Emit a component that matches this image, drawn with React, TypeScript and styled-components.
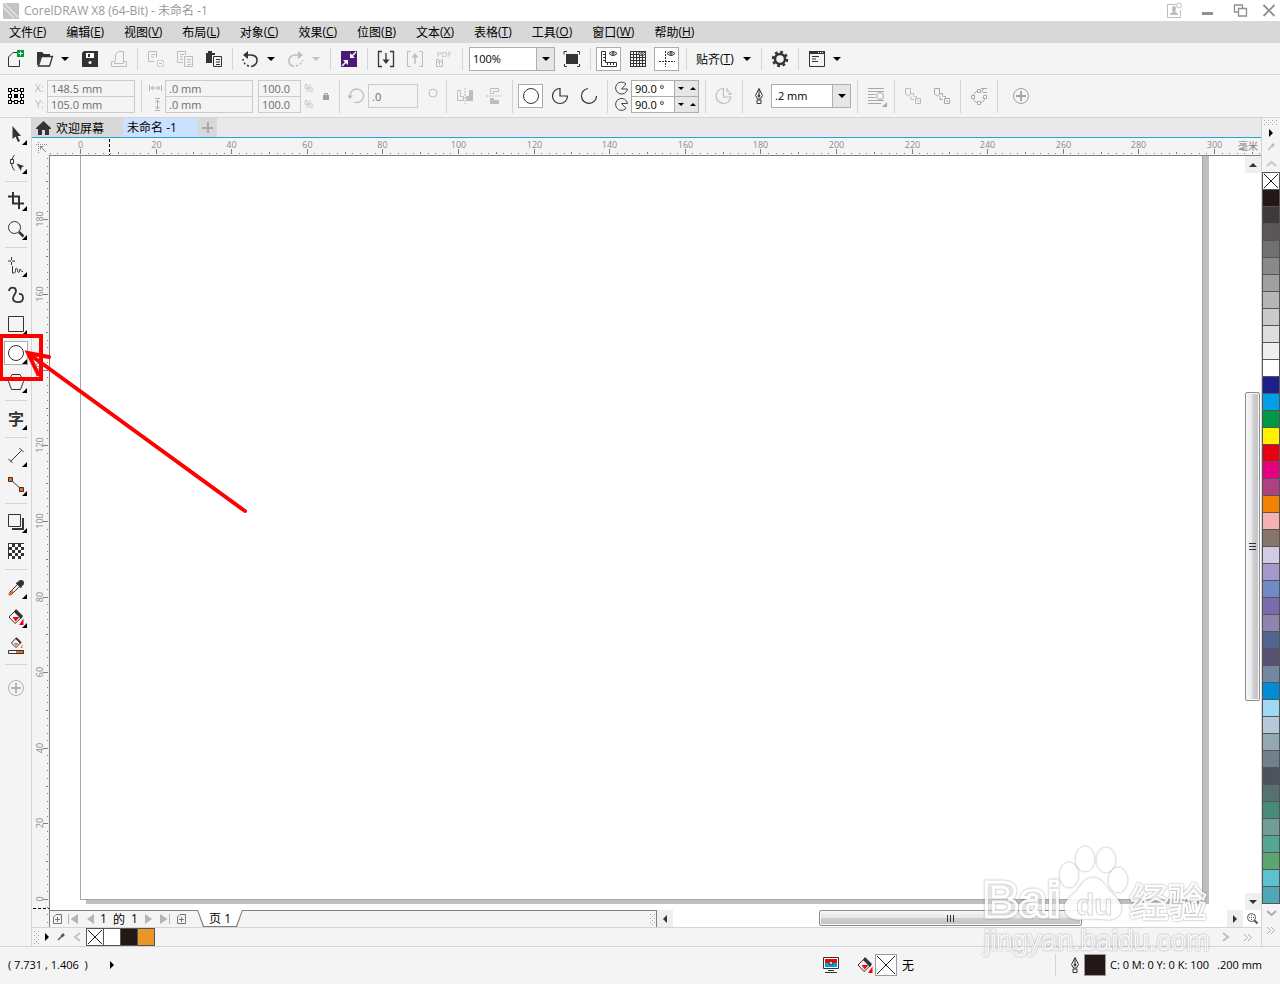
import React from "react";
import styled, { createGlobalStyle, css } from "styled-components";

const ink = "#333333";
const faint = "#bdbdbd";
const line = "#d4d4d4";
const panel = "#f4f4f4";

const GlobalStyle = createGlobalStyle`
  *, *::before, *::after { box-sizing: border-box; }
  body {
    margin: 0;
    background: ${panel};
    color: #000;
    font: 11px/16px "Open Sans", "Noto Sans CJK SC", sans-serif;
  }
  button, input, select { font: inherit; color: inherit; border-radius: 0; margin: 0; padding: 0; }
  button { background: none; border: 0; }
  svg { display: block; flex: none; }
`;

/* ---------- frame ---------- */

const Shell = styled.div`
  position: relative;
  display: flex;
  flex-direction: column;
  min-height: 100vh;
  overflow: hidden;
`;

const Cjk = styled.span`
  font: 12px/16px "Noto Sans CJK SC", sans-serif;
`;

const TitleBar = styled.header`
  display: flex;
  align-items: center;
  height: 21px;
  padding-left: 3px;
  background: #fff;
  color: #999;
`;

const Title = styled.h1`
  flex: 1;
  margin: 0 0 0 5px;
  font-size: 12px;
  line-height: 16px;
  font-weight: 400;
`;

const WindowButton = styled.button<{ $w: number }>`
  display: flex;
  justify-content: center;
  width: ${(p) => p.$w}px;
`;

const MenuBar = styled.nav`
  display: flex;
  align-items: center;
  gap: 20px;
  height: 22px;
  padding-left: 9px;
  background: #d8d8d8;
`;

const MenuItem = styled.button`
  display: flex;
  align-items: center;
  font-size: 12px;
  white-space: nowrap;
`;

const Bar = styled.div<{ $h: number }>`
  display: flex;
  align-items: center;
  height: ${(p) => p.$h}px;
  padding-left: 1px;
  border-bottom: 1px solid ${line};
  background: ${panel};
`;

const IconButton = styled.button<{ $w?: number; $on?: boolean }>`
  display: flex;
  flex: none;
  align-items: center;
  justify-content: center;
  width: ${(p) => p.$w ?? 29}px;
  height: 24px;
  ${(p) =>
    p.$on &&
    css`
      width: 25px;
      margin: 0 2px;
      background: #fff;
      border: 1px solid #adadad;
    `}
`;

const CaretButton = styled.button`
  display: flex;
  flex: none;
  justify-content: center;
  width: 16px;
  padding-right: 4px;
`;

const Sep = styled.span<{ $h: number }>`
  flex: none;
  width: 8px;
  height: ${(p) => p.$h}px;
  &::before {
    content: "";
    display: block;
    width: 1px;
    height: 100%;
    margin-left: 4px;
    background: ${line};
  }
`;

const SnapButton = styled.button`
  display: flex;
  width: 51px;
  padding-left: 6px;
  font-size: 12px;
  white-space: nowrap;
`;

const Combo = styled.label<{ $w: number }>`
  display: grid;
  flex: none;
  grid-template-columns: 1fr 18px;
  width: ${(p) => p.$w}px;
  height: 24px;
  margin-right: 2px;
  border: 1px solid #adadad;
  select {
    grid-area: 1 / 1 / 2 / 3;
    appearance: none;
    padding-left: 3px;
    border: 0;
    background: #fff;
  }
  span {
    display: grid;
    grid-area: 1 / 2 / 2 / 3;
    place-items: center;
    border-left: 1px solid #adadad;
    background: #e6e6e6;
    pointer-events: none;
  }
`;

/* ---------- property bar fields ---------- */

const Stack = styled.div<{ $w?: number }>`
  display: flex;
  flex: none;
  flex-direction: column;
  width: ${(p) => (p.$w ? p.$w + "px" : "auto")};
`;

const StackLabel = styled.label`
  display: flex;
  align-items: center;
  justify-content: flex-end;
  height: 16px;
  padding-right: 3px;
  color: ${faint};
`;

const Field = styled.input<{ $w: number; $h?: number; $live?: boolean }>`
  flex: none;
  width: ${(p) => p.$w}px;
  height: ${(p) => p.$h ?? 17}px;
  padding: 0 2px 0 3px;
  border: 1px solid ${(p) => (p.$live ? "#adadad" : "#cbcbcb")};
  background: ${(p) => (p.$live ? "#fff" : panel)};
  color: ${(p) => (p.$live ? "#000" : "#6d6d6d")};
  & + & { margin-top: -1px; }
`;

const SpinRow = styled.div`
  display: flex;
  height: 17px;
  & + & { margin-top: -1px; }
`;

const Spin = styled.button`
  display: grid;
  place-items: center;
  width: 12px;
  border: solid #adadad;
  border-width: 1px 0;
  background: #e6e6e6;
  &:last-child { border-right-width: 1px; }
`;

const Gap = styled.span<{ $w: number }>`
  flex: none;
  width: ${(p) => p.$w}px;
`;

/* ---------- body ---------- */

const Body = styled.div`
  display: flex;
  flex: 1;
`;

const Toolbox = styled.aside`
  display: flex;
  flex: none;
  flex-direction: column;
  width: 32px;
  padding: 2px 0 0 1px;
  border-right: 1px solid ${line};
`;

const Tool = styled.button`
  display: block;
  width: 30px;
  height: 29px;
`;

const ToolSep = styled.span`
  height: 8px;
  padding: 3px 4px 0;
  &::before {
    content: "";
    display: block;
    height: 1px;
    background: ${line};
  }
`;

const Center = styled.main`
  display: flex;
  flex: 1;
  flex-direction: column;
  min-width: 0;
`;

const TabStrip = styled.div`
  display: flex;
  height: 20px;
  border-bottom: 1px solid #1ea5e0;
  background: #e9e9e9;
`;

const Tab = styled.button<{ $w: number; $active?: boolean }>`
  display: flex;
  align-items: center;
  gap: 5px;
  width: ${(p) => p.$w}px;
  padding-left: 4px;
  background: ${(p) => (p.$active ? "#cce1ff" : "#d8d8d8")};
  font-size: 12px;
  white-space: nowrap;
`;

const Desk = styled.div`
  display: grid;
  flex: 1;
  grid-template-columns: 18px 1fr;
  grid-template-rows: 18px 1fr 17px;
`;

const Corner = styled.div`
  padding: 4px 0 0 4px;
`;

const TopRuler = styled.div`
  margin-left: -1px;
  padding-left: 1px;
  border-bottom: 1px solid #7f7f7f;
  overflow: hidden;
`;

const SideRuler = styled.div`
  display: flex;
  grid-row: 2 / 4;
  flex-direction: column;
  justify-content: flex-end;
  border-right: 1px solid #7f7f7f;
  overflow: hidden;
`;

const Workspace = styled.div`
  display: flex;
  background: #fff;
  overflow: hidden;
`;

const Sheet = styled.div`
  flex: 1;
  margin: -10px 42px 10px 30px;
  border: 1px solid #a6a6a6;
  background: #fff;
  box-shadow: 6px 4px 0 #bfbfbf;
`;

const VScroll = styled.div`
  display: flex;
  flex: none;
  flex-direction: column;
  width: 16px;
`;

const VTrack = styled.div`
  display: flex;
  flex: 1;
  flex-direction: column;
  padding-right: 1px;
`;

const thumb = css`
  display: grid;
  place-items: center;
  border: 1px solid #8c8c8c;
  border-radius: 2px;
  box-shadow: inset 0 0 0 1px #f7f7f7;
`;

const VLead = styled.div`
  height: 30.4%;
`;

const VThumb = styled.div`
  ${thumb}
  height: 43%;
  background: linear-gradient(90deg, #f7f7f7, #e6e6e8 48%, #cfcfd2 52%, #c2c2c5);
`;

const HTrack = styled.div`
  display: flex;
  flex: 1;
  padding-bottom: 1px;
`;

const HThumb = styled.div`
  ${thumb}
  width: 47.5%;
  margin-left: 26.4%;
  background: linear-gradient(#f7f7f7, #e6e6e8 48%, #cfcfd2 52%, #c2c2c5);
`;

const ScrollButton = styled.button`
  display: grid;
  flex: none;
  place-items: center;
  width: 16px;
  height: 17px;
  background: #efefef;
`;

const NavRow = styled.div`
  display: flex;
  background: #fff;
`;

const PageNav = styled.div`
  display: flex;
  flex: 1;
  align-items: center;
  padding-left: 1px;
  border-top: 1px solid #7f7f7f;
  border-right: 1px solid #7f7f7f;
  background: ${panel};
`;

const ScrollSide = styled.div`
  display: flex;
  flex: 1;
`;

const NavButton = styled.button<{ $w: number }>`
  display: grid;
  place-items: center;
  width: ${(p) => p.$w}px;
  height: 16px;
`;

const PageCount = styled.span`
  display: flex;
  justify-content: center;
  gap: 6px;
  width: 44px;
  font-size: 12px;
`;

const PageTab = styled.button`
  display: block;
  width: 46px;
  height: 17px;
  margin: -1px auto 0 9px;
  padding: 0 1px 1px;
  background: #7f7f7f;
  clip-path: polygon(0 0, 100% 0, calc(100% - 6px) 100%, 6px 100%);
  span {
    white-space: nowrap;
  }
  > span {
    display: block;
    height: 16px;
    background: #fff;
    font-size: 12px;
    line-height: 15px;
    clip-path: polygon(0 0, 100% 0, calc(100% - 6px) 100%, 6px 100%);
  }
`;

const DocPalette = styled.div`
  display: flex;
  align-items: center;
  height: 19px;
  padding-left: 2px;
  border-top: 1px solid ${line};
`;

const DocSwatches = styled.div`
  display: flex;
  gap: 1px;
  padding: 1px;
  margin: 0 auto 0 0;
  background: #555;
`;

const Swatch = styled.button<{ $c: string }>`
  display: block;
  width: 16px;
  height: 16px;
  background: ${(p) => p.$c};
`;

const PaletteColumn = styled.aside`
  display: flex;
  flex: none;
  flex-direction: column;
  width: 19px;
  border-left: 1px solid ${line};
`;

const PaletteButton = styled.button<{ $h: number }>`
  display: grid;
  place-items: center;
  height: ${(p) => p.$h}px;
`;

const SwatchList = styled.div`
  display: grid;
  gap: 1px;
  padding: 1px;
  background: #555;
`;

const StatusBar = styled.footer`
  display: flex;
  align-items: center;
  height: 38px;
  padding: 0 18px 2px 8px;
  border-top: 1px solid ${line};
  white-space: pre;
`;

const Coordinates = styled.span`
  width: 100px;
`;

const FillStatus = styled.div`
  display: flex;
  align-items: center;
  width: 232px;
  margin-left: auto;
  gap: 2px;
`;

const OutlineStatus = styled.div`
  display: flex;
  align-items: center;
  gap: 4px;
  height: 22px;
  padding-left: 14px;
  border-left: 1px solid ${line};
`;

const OutlineText = styled.span`
  display: flex;
  gap: 8px;
`;

const ColorWell = styled.span<{ $c: string }>`
  width: 22px;
  height: 22px;
  border: 1px solid #9a9a9a;
  background: ${(p) => p.$c};
`;

const Callout = styled.svg`
  position: absolute;
  top: 334px;
  left: 0;
  pointer-events: none;
`;

const Watermark = styled.svg`
  position: absolute;
  right: 66px;
  bottom: 26px;
  pointer-events: none;
  opacity: 0.9;
  filter: drop-shadow(0 0 1px rgba(0, 0, 0, 0.4));
`;

/* ---------- drawings ---------- */

type GlyphProps = { children: React.ReactNode; w?: number; h?: number; c?: string; crisp?: boolean; sw?: number };

const Glyph = ({ children, w = 16, h = 16, c = ink, crisp, sw = 1 }: GlyphProps) => (
  <svg
    width={w}
    height={h}
    viewBox={`0 0 ${w} ${h}`}
    fill="none"
    stroke={c}
    color={c}
    strokeWidth={sw}
    shapeRendering={crisp ? "crispEdges" : "auto"}
    overflow="visible"
    aria-hidden="true"
  >
    {children}
  </svg>
);

const solid = { fill: "currentColor", stroke: "none" };

const Caret = ({ c = "#000" }: { c?: string }) => (
  <Glyph w={8} h={4} c={c}><path {...solid} d="M0 0h8L4 4z" /></Glyph>
);
const Tiny = ({ up }: { up?: boolean }) => (
  <Glyph w={6} h={3} c="#000"><path {...solid} d={up ? "M0 3h6L3 0z" : "M0 0h6L3 3z"} /></Glyph>
);
const RightArrow = ({ c = "#000" }: { c?: string }) => (
  <Glyph w={4} h={8} c={c}><path {...solid} d="M0 0v8l4-4z" /></Glyph>
);
const Grip = ({ w, h }: { w: number; h: number }) => (
  <Glyph w={w} h={h} c="#a8a8a8" crisp>
    {Array.from({ length: Math.ceil(w / 2) * Math.ceil(h / 2) }, (_, i) => {
      const cols = Math.ceil(w / 2);
      const x = (i % cols) * 2;
      const y = Math.floor(i / cols) * 2;
      return (x + y) % 4 === 0 ? <rect key={i} {...solid} x={x} y={y} width="1" height="1" /> : null;
    })}
  </Glyph>
);
const Pencil = ({ c }: { c: string }) => (
  <Glyph w={8} h={8} c={c}>
    <path d="M1 7l4-4" strokeWidth="1.5" /><path d="M4.500 3.500L7 1" strokeWidth="2.5" />
  </Glyph>
);
const Cross = ({ s }: { s: number }) => (
  <Glyph w={s} h={s} c="#222"><path d={`M1 1L${s - 1} ${s - 1}M${s - 1} 1L1 ${s - 1}`} /></Glyph>
);
const Eye = () => (
  <g><path d="M8 2.500q4-4 8 0q-4 4-8 0z" fill={panel} /><circle cx="12" cy="2.500" r="1" /></g>
);
const NewPage = () => (
  <Glyph w={9} h={10} c="#777"><path d="M3 .5h5.500v9h-8V3zM4.500 3v5M2 5.500h5" /></Glyph>
);
const Bucket = () => (
  <g>
    <path d="M8 1L1 8l6 6.500L14 8z" />
    <path d="M4.500 8h7L7.500 12.500z" fill="#f00" stroke="none" />
    <path d="M8 0l7 7-2 3-7-7z" fill={ink} stroke="none" />
    <path d="M15.500 9.500V16h-4.500z" fill="#f00" stroke="none" />
  </g>
);
const PenNib = () => (
  <Glyph w={10} h={16} c={ink}>
    <path d="M5 .5L1.500 7.500l2 3.500h3l2-3.500zM5 1v7" /><circle cx="5" cy="8" r="1" fill={ink} /><path d="M3 12h4v3.500H3z" />
  </Glyph>
);
const PlusCircle = () => (
  <g><circle cx="8" cy="8" r="7.500" /><path d="M8 3v10M3 8h10" strokeWidth="1.800" /></g>
);

const toolGroups: { name: string; art: React.ReactNode; fly?: boolean }[][] = [
  [
    { name: "选择", fly: true, art: <path {...solid} d="M4.500 0v13l3-2.500 2.500 5.500 2-1-2.500-5h3.500z" /> },
    { name: "形状", fly: true, art: <g><path d="M6.500 0C2 5 3 11 6.500 15.500" /><path d="M2.500 4.500h3v4h-3z" fill={panel} /><path {...solid} d="M8.500 8.500L16 11l-2.500 1.500L13 16z" /></g> },
  ],
  [
    { name: "裁剪", fly: true, art: <path strokeWidth="2" d="M0 4.500h11V17M5 0v11.500h11" /> },
    { name: "缩放", fly: true, art: <g><circle cx="6.500" cy="6.500" r="6" /><path strokeWidth="2.500" d="M11 11l4.500 4.500" /></g> },
  ],
  [
    { name: "手绘", fly: true, art: <g><path d="M3.500-1v3M3.500 4v3M0 3h3M4 3h3M4.500 8v7h2c1.500 0 .5-5 2-5s.5 4.500 2 4.500 .5-3.500 1.500-3.500 .5 3 3 2.500" /></g> },
    { name: "艺术笔", art: <path strokeWidth="1.800" d="M1 4C1-.5 8-.5 8 4c0 3-3 4-3 7.500 0 5 10 5 10-.5 0-3-1.500-4.500-4-4" /> },
    { name: "矩形", fly: true, art: <path d="M.5.5h15v15H.5z" /> },
    { name: "椭圆形", fly: true, art: <g><rect x="-3.500" y="-3.500" width="23" height="23" fill="#fff" stroke="#adadad" /><circle cx="8" cy="8" r="7.500" /></g> },
    { name: "多边形", fly: true, art: <path d="M4 .5h8l3.500 7-3 8h-9l-3-8z" /> },
  ],
  [
    { name: "文本", fly: true, art: <text x="8" y="14" textAnchor="middle" fontSize="16" fontWeight="700" fontFamily="Noto Sans CJK SC, sans-serif" fill={ink} stroke="none">字</text> },
  ],
  [
    { name: "平行度量", fly: true, art: <path d="M2.500 13.500l11-11M.5 11l4 4M11.500 0l4 4" /> },
    { name: "连接器", fly: true, art: <g><path d="M3 3l10 9" /><path fill="#ff6a00" d="M.5.5h4v4h-4zM11.500 10.500h4v4h-4z" /></g> },
  ],
  [
    { name: "阴影", fly: true, art: <g><path d="M.5.5h12v12H.5z" /><path strokeWidth="2" d="M15 4v11H4" /></g> },
    { name: "透明度", art: <g shapeRendering="crispEdges"><rect {...solid} width="16" height="16" />{Array.from({ length: 25 }, (_, i) => i % 2 ? null : <rect key={i} x={(i % 5) * 3 + 1} y={Math.floor(i / 5) * 3 + 1} width="3" height="3" fill="#fff" stroke="none" />)}</g> },
  ],
  [
    { name: "颜色滴管", fly: true, art: <g><path d="M1 15l1-3 8-8 2 2-8 8z" /><path d="M1.500 14.500L5 11" stroke="#f26a1b" strokeWidth="2.500" /><path strokeWidth="2" d="M8.500 2.500l5 5" /><circle {...solid} cx="13" cy="3" r="3" /></g> },
    { name: "交互式填充", fly: true, art: <Bucket /> },
    { name: "智能填充", art: <g><path d="M8 0L3.500 5 8 9.500 12.500 5z" /><path strokeWidth="1.800" d="M8 0l5 5" /><path fill="#f26a1b" stroke="none" d="M6 5h4.500L8 8zM14.500 6v4H12.500zM8 12h8v4H8z" /><path d="M.5 12.500h15v3H.5z" /></g> },
  ],
];

const swatches = [
  "#231815", "#3e3a39", "#595757", "#727171", "#898989", "#9fa0a0", "#b4b5b5", "#c9caca", "#dcdddd", "#efefef",
  "#ffffff", "#1d2088", "#00a0e9", "#009944", "#fff100", "#e60012", "#e4007f", "#b04080", "#f08300", "#f5b2b2",
  "#86756b", "#cfcce4", "#a499ca", "#718bc7", "#7a6bae", "#9084ae", "#4f6590", "#58516f", "#7388a0", "#008cd6",
  "#9fd9f6", "#b5cad9", "#94a8b2", "#71808a", "#4b545e", "#567270", "#468b7a", "#729b9a", "#54a795", "#5aa572",
  "#5bc2d1", "#4fa8b6",
];

const menus: [string, string][] = [
  ["文件", "F"], ["编辑", "E"], ["视图", "V"], ["布局", "L"], ["对象", "C"], ["效果", "C"],
  ["位图", "B"], ["文本", "X"], ["表格", "T"], ["工具", "O"], ["窗口", "W"], ["帮助", "H"],
];

const PX_PER_MM = 3.78;
const tickSize = (mm: number) => (mm % 20 === 0 ? 5 : mm % 10 === 0 ? 2 : 1);
const range = (from: number, to: number) => Array.from({ length: (to - from) / 2 + 1 }, (_, i) => from + i * 2);
const rulerText = { fontSize: 9, fill: "#8a8a8a", textAnchor: "middle" as const };

const HorizontalRuler = () => (
  <svg width="100%" height="17" aria-label="水平标尺">
    {range(-8, 312).map((mm) => {
      const x = Math.round(30 + mm * PX_PER_MM);
      const t = tickSize(mm);
      return (
        <g key={mm}>
          <rect x={x} y={16 - t} width="1" height={t} fill="#7f7f7f" />
          {t === 5 && mm >= 0 && <text {...rulerText} x={x + 0.5} y="10">{mm}</text>}
        </g>
      );
    })}
    <path d="M59.500 1v16" stroke="#000" strokeDasharray="3 2" />
    <text x="100%" dx="-3" y="12" textAnchor="end" fontSize="10" fontFamily="Noto Sans CJK SC, sans-serif" fill="#7f7f7f">毫米</text>
  </svg>
);

const VerticalRuler = () => (
  <svg width="17" height="771" aria-label="垂直标尺">
    {range(-6, 196).map((mm) => {
      const y = Math.round(743 - mm * PX_PER_MM);
      const t = tickSize(mm);
      return (
        <g key={mm}>
          <rect x={16 - t} y={y} width={t} height="1" fill="#7f7f7f" />
          {t === 5 && <text {...rulerText} transform={`translate(11 ${y}) rotate(-90)`}>{mm}</text>}
        </g>
      );
    })}
    <path d="M1 752.500h16" stroke="#000" strokeDasharray="3 2" />
  </svg>
);

const ArcArrow = ({ c }: { c: string }) => (
  <Glyph c={c} w={17}>
    <path strokeWidth="1.500" d="M5 4h4.500c8 1 7 10-.5 11.500" /><path strokeWidth="1.500" strokeDasharray="2 2" d="M7 15C3 14 1 11 1 8" /><path {...solid} d="M6 0v8L1 4z" />
  </Glyph>
);

/* ---------- sections ---------- */

const StandardBar = () => (
  <Bar $h={32} role="toolbar" aria-label="标准">
    <IconButton aria-label="新建"><Glyph><path d="M9 1.500H5L.5 6v9.500h11V9" /><path fill="#009a3d" stroke="none" d="M9-1h7v7H9z" /><path stroke="#fff" d="M12.500.5v4M10.500 2.500h4" /></Glyph></IconButton>
    <IconButton aria-label="打开"><Glyph><path {...solid} d="M0 1h5l2 2h6v3H4L1 14H0z" /><path d="M4.500 5.500h11l-3 9.500H1.500z" fill={panel} strokeWidth="1.300" /></Glyph></IconButton>
    <CaretButton aria-label="最近打开"><Caret /></CaretButton>
    <IconButton aria-label="保存"><Glyph><path {...solid} d="M2 0h14v16H0V2z" /><path fill="#fff" stroke="none" d="M4 2h8v5H4z" /><path {...solid} d="M6 3h2v3H6z" /><circle cx="8" cy="11.500" r="1.500" fill="#fff" stroke="none" /></Glyph></IconButton>
    <IconButton aria-label="打印"><Glyph c={faint}><path d="M4.500 10V3l3-2.500h5V10M.5 15.500v-5h3v2h9v-2h3v5z" /></Glyph></IconButton>
    <Sep $h={22} />
    <IconButton aria-label="剪切"><Glyph c={faint}><path d="M8.500 6.500v-6h-8v10h6M3 3.500h4M3 6h3" /><path strokeDasharray="2 1" d="M9.500 9.500h6v6h-6z" /><path d="M11 12.500h3" /></Glyph></IconButton>
    <IconButton aria-label="复制"><Glyph c={faint}><path d="M6 11.500H.5v-11h8V4M3 3.500h4M3 6h3M3 8.500h3M7.500 5.500h8v10h-8zM10 8.500h4M10 11h4M10 13.500h4" /></Glyph></IconButton>
    <IconButton aria-label="粘贴"><Glyph><path {...solid} d="M0 2h2V0h4v2h3v2H6v8H0z" /><path d="M7.500 5.500h8v10h-8zM10 8.500h4M10 11h4M10 13.500h4" /></Glyph></IconButton>
    <Sep $h={22} />
    <IconButton aria-label="撤消"><ArcArrow c={ink} /></IconButton>
    <CaretButton aria-label="撤消列表"><Caret /></CaretButton>
    <IconButton aria-label="重做"><Glyph c={faint}><path strokeWidth="1.500" d="M11 4H7C-1 5-1 14 6 15.500" /><path strokeDasharray="2 2" strokeWidth="1.500" d="M8 15c4-1 6-3 6.500-6" /><path {...solid} d="M10 0v8l5-4z" /></Glyph></IconButton>
    <CaretButton aria-label="重做列表"><Caret c="#c4c4c4" /></CaretButton>
    <Sep $h={22} />
    <IconButton aria-label="搜索内容"><Glyph c="#fff"><path fill="#4b1a78" stroke="none" d="M0 0h16v16H0z" /><path strokeWidth="1.500" d="M15 1l-4 4M1 15l4-4" /><path {...solid} d="M9 2v5h5zM7 14V9H2z" /></Glyph></IconButton>
    <Sep $h={22} />
    <IconButton aria-label="导入"><Glyph><path strokeWidth="1.300" d="M4 .5H.5v15H4M12 .5h3.500v15H12M8 2v8" /><path {...solid} d="M4.500 8.500h7L8 13z" /></Glyph></IconButton>
    <IconButton aria-label="导出"><Glyph c={faint}><path d="M4 .5H.5v15H4M12 .5h3.500v15H12" /><path strokeWidth="1.500" d="M8 5v8" /><path {...solid} d="M4.500 6.500h7L8 2z" /></Glyph></IconButton>
    <IconButton aria-label="发布为 PDF"><Glyph c={faint}><text x="8" y="6" fontSize="8" textAnchor="middle" {...solid}>PDF</text><path d="M3 8.500H.5v7h6v-7H5M3.500 14V9M1.500 11.500L3.500 9.500l2 2" /></Glyph></IconButton>
    <Sep $h={22} />
    <Gap $w={3} />
    <Combo $w={86}>
      <select aria-label="缩放级别" defaultValue="100%"><option>100%</option></select>
      <span><Caret /></span>
    </Combo>
    <IconButton aria-label="全屏预览"><Glyph><path {...solid} d="M2 3h12v10H2z" /><path d="M0 3.500V.5h3M13 .5h2.500v3M.5 13v2.500H3M13 15.500h2.500V13" /></Glyph></IconButton>
    <Sep $h={22} />
    <IconButton $on aria-label="显示标尺"><Glyph><path d="M.5.5h4v11h11v4H.5zM2 3.500h2M2 6.500h2M2 9.500h2M6.500 12v2M9.500 12v2M12.500 12v2" /><Eye /></Glyph></IconButton>
    <IconButton aria-label="显示网格"><Glyph crisp><path d="M.5.500v15h15v-15zM3.500 0v16M6.500 0v16M9.500 0v16M12.500 0v16M0 3.500h16M0 6.500h16M0 9.500h16M0 12.500h16" /><g shapeRendering="auto"><Eye /></g></Glyph></IconButton>
    <IconButton $on aria-label="显示辅助线"><Glyph><path strokeDasharray="2 1" d="M6.500 0v16M0 10.500h16" /><Eye /></Glyph></IconButton>
    <Gap $w={1} />
    <Sep $h={22} />
    <SnapButton><Cjk>贴齐</Cjk>(<u>T</u>)</SnapButton>
    <CaretButton aria-label="贴齐选项"><Caret /></CaretButton>
    <Sep $h={22} />
    <IconButton aria-label="选项"><Glyph><circle cx="8" cy="8" r="5" strokeWidth="2.500" /><circle cx="8" cy="8" r="7" strokeWidth="2.400" strokeDasharray="2.800 2.700" /></Glyph></IconButton>
    <Sep $h={22} />
    <IconButton aria-label="应用程序启动器"><Glyph><path d="M.5.5h15v15H.5z" /><path {...solid} d="M0 0h16v3H0z" /><path stroke="#fff" strokeDasharray="1 1" d="M9 1.500h6" /><path d="M3 5.500h7M3 8h4M3 10.500h6" /></Glyph></IconButton>
    <CaretButton aria-label="启动器列表"><Caret /></CaretButton>
  </Bar>
);

const PropertyBar = () => (
  <Bar $h={43} role="toolbar" aria-label="属性栏">
    <IconButton aria-label="对象原点">
      <Glyph c="#000" crisp>
        <path d="M2.500 2.500h11v11h-11z" />
        {[0, 6, 12].flatMap((y) => [0, 6, 12].map((x) => <rect key={`${x}-${y}`} x={x + 0.5} y={y + 0.5} width="3" height="3" fill={x === 6 && y === 6 ? "#000" : "#fff"} />))}
      </Glyph>
    </IconButton>
    <Stack $w={17}><StackLabel htmlFor="px">X:</StackLabel><StackLabel htmlFor="py">Y:</StackLabel></Stack>
    <Stack><Field id="px" $w={88} defaultValue="148.5 mm" /><Field id="py" $w={88} defaultValue="105.0 mm" /></Stack>
    <Gap $w={2} /><Sep $h={33} /><Gap $w={2} />
    <Stack $w={18}>
      <StackLabel htmlFor="sw" aria-label="宽度"><Glyph w={13} h={6} c="#b0b0b0"><path d="M.5 0v6M12.500 0v6M2 3h9M4.500 1L2 3l2.500 2M8.500 1L11 3 8.500 5" /></Glyph></StackLabel>
      <StackLabel htmlFor="sh" aria-label="高度"><Glyph w={9} h={13} c="#b0b0b0"><path d="M2 .5h5M2 12.500h5M4.500 2v9M2.500 4.500l2-2.500 2 2.500M2.500 8.500l2 2.500 2-2.500" /></Glyph></StackLabel>
    </Stack>
    <Stack><Field id="sw" $w={88} defaultValue=".0 mm" /><Field id="sh" $w={88} defaultValue=".0 mm" /></Stack>
    <Gap $w={5} />
    <Stack><Field id="fx" $w={43} defaultValue="100.0" /><Field id="fy" $w={43} defaultValue="100.0" /></Stack>
    <Stack $w={15}><StackLabel htmlFor="fx">%</StackLabel><StackLabel htmlFor="fy">%</StackLabel></Stack>
    <IconButton $w={19} aria-label="锁定比率"><Glyph w={6} h={8} c="#a0a0a0"><path d="M1.500 4V1.500h3V4" /><path {...solid} d="M0 3h6v5H0z" /></Glyph></IconButton>
    <Sep $h={33} />
    <IconButton $w={25} as="label" htmlFor="rot" aria-label="旋转角度"><Glyph c={faint}><path strokeWidth="1.300" d="M2 8a6.800 6.800 0 1 1 4 6" /><path {...solid} d="M-1 7.500h6L2 11z" /></Glyph></IconButton>
    <Field id="rot" $w={50} $h={24} defaultValue=".0" />
    <Gap $w={10} />
    <Glyph w={10} c={faint}><circle cx="5" cy="5" r="4" /></Glyph>
    <Gap $w={4} />
    <Sep $h={33} />
    <IconButton aria-label="水平镜像"><Glyph c={faint}><path d="M.5 2.500h3v6h3v4h-6z" /><path strokeDasharray="2 1" d="M8 0v16" /><path fill={faint} d="M15.500 2.500h-3v6h-3v4h6z" /></Glyph></IconButton>
    <IconButton aria-label="垂直镜像"><Glyph c={faint}><path d="M4.500.5h8v3h-5v2h-3z" /><path strokeDasharray="2 1" d="M0 8h16" /><path fill={faint} d="M4.500 15.500h8v-3h-5v-2h-3z" /></Glyph></IconButton>
    <Sep $h={33} />
    <IconButton $on aria-label="椭圆形"><Glyph><circle cx="8" cy="8" r="7.500" /></Glyph></IconButton>
    <IconButton aria-label="饼图"><Glyph><path strokeWidth="1.200" d="M8 .5A7.500 7.500 0 1 0 15.500 8H8z" /></Glyph></IconButton>
    <IconButton aria-label="弧"><Glyph><path strokeWidth="1.200" d="M7 .5A7.500 7.500 0 1 0 15.500 8" /></Glyph></IconButton>
    <Sep $h={33} />
    <Stack $w={20}>
      <StackLabel htmlFor="a1" aria-label="起始角度"><Glyph w={13} h={12} c="#444"><path d="M11 2A6 6 0 1 0 12.500 7H6.500z" /></Glyph></StackLabel>
      <StackLabel htmlFor="a2" aria-label="结束角度"><Glyph w={13} h={12} c="#444"><path d="M11 10.500A6 6 0 1 1 12.500 5.500H6.500z" /></Glyph></StackLabel>
    </Stack>
    <Stack>
      {["a1", "a2"].map((id) => (
        <SpinRow key={id}>
          <Field id={id} $w={44} $live defaultValue="90.0 °" />
          <Spin aria-label="减小"><Tiny /></Spin><Spin aria-label="增大"><Tiny up /></Spin>
        </SpinRow>
      ))}
    </Stack>
    <Gap $w={2} /><Sep $h={33} />
    <IconButton aria-label="更改方向"><Glyph c={faint}><path strokeWidth="1.200" d="M7.500.5A7.500 7.500 0 1 0 15 9H7.500z" /><path d="M10 2c3 0 4 2 4 4M12 5l2 2 2-2M12 0l-2 2 2 2" /></Glyph></IconButton>
    <Sep $h={33} />
    <IconButton $w={25} as="label" htmlFor="outline" aria-label="轮廓宽度"><PenNib /></IconButton>
    <Combo $w={80}>
      <select id="outline" defaultValue=".2 mm"><option>.2 mm</option></select>
      <span><Caret /></span>
    </Combo>
    <Sep $h={33} />
    <IconButton aria-label="文本换行"><Glyph c="#a8a8a8"><path d="M0 .5h16M0 3.500h16M0 6.500h7M0 9.500h7M0 12.500h16M0 15.500h13" /><circle cx="12" cy="8" r="3.500" fill={panel} /><path {...solid} d="M19 14v5h-5z" /></Glyph></IconButton>
    <Sep $h={33} />
    <IconButton aria-label="到图层前面"><Glyph c={faint}><path d="M.5.5h5v6l-2 1.500-3-2zM5.500 5.500h3v3M6 8.500v3h3M9.500 8.500h2v2M10.500 10.500h5v5h-5zM12 12l2 2" /></Glyph></IconButton>
    <IconButton aria-label="到图层后面"><Glyph c="#a8a8a8"><path d="M.5.5h5v6l-2 1.500-3-2zM5.500 5.500h3v3M6 8.500v3h3M9.500 8.500h2v2M10.500 10.500h5v5h-5zM12 12l2 2" /></Glyph></IconButton>
    <Sep $h={33} />
    <IconButton aria-label="转换为曲线"><Glyph c="#a8a8a8"><path d="M8 3a6 6 0 1 0 6 6M10 .5h6M12 4.500h4M10 4.500l3-4" /><g fill="#fff"><path d="M6.500 1.500h3v3h-3zM.5 7.500h3v3h-3zM6.500 13.500h3v3h-3zM12.500 7.500h3v3h-3z" /></g></Glyph></IconButton>
    <Sep $h={33} />
    <Gap $w={5} />
    <IconButton aria-label="快速自定义"><Glyph c="#a0a0a0"><PlusCircle /></Glyph></IconButton>
  </Bar>
);

const DrawingWindow = () => (
  <Center>
    <TabStrip>
      <Tab $w={91}><Glyph w={15} h={14}><path {...solid} d="M7.500 0L15 7v1h-2v6H9V9H6v5H2V8H0V7z" /></Glyph><Cjk>欢迎屏幕</Cjk></Tab>
      <Tab $w={75} $active><span><Cjk>未命名</Cjk> -1</span></Tab>
      <Tab $w={19} aria-label="新建文档"><Glyph w={11} h={11} c="#a8a8a8" sw={2} crisp><path d="M5.500 0v11M0 5.500h11" /></Glyph></Tab>
    </TabStrip>
    <Desk>
      <Corner><Glyph w={11} h={11} c="#8a8a8a"><path strokeDasharray="1 1" d="M0 2.500h11M2.500 0v11" /><path d="M4 4l6 6M4.500 7.500v-3h3" /></Glyph></Corner>
      <TopRuler><HorizontalRuler /></TopRuler>
      <SideRuler><VerticalRuler /></SideRuler>
      <Workspace>
        <Sheet />
        <VScroll>
          <ScrollButton aria-label="向上滚动"><Glyph w={8} h={4}><path {...solid} d="M0 4h8L4 0z" /></Glyph></ScrollButton>
          <VTrack>
            <VLead />
            <VThumb><Glyph w={7} h={8} crisp><path d="M0 .5h7M0 3.500h7M0 6.500h7" /></Glyph></VThumb>
          </VTrack>
          <ScrollButton aria-label="向下滚动"><Caret c={ink} /></ScrollButton>
        </VScroll>
      </Workspace>
      <NavRow>
        <PageNav>
          <NavButton $w={12} aria-label="在前面添加页"><NewPage /></NavButton>
          <NavButton $w={20} aria-label="第一页"><Glyph w={10} h={10} c="#b5b5b5"><path d="M.5 0v10" /><path {...solid} d="M10 0v10L2.500 5z" /></Glyph></NavButton>
          <NavButton $w={14} aria-label="上一页"><Glyph w={7} h={10} c="#b5b5b5"><path {...solid} d="M7 0v10L0 5z" /></Glyph></NavButton>
          <PageCount>1<Cjk>的</Cjk>1</PageCount>
          <NavButton $w={14} aria-label="下一页"><Glyph w={7} h={10} c="#b5b5b5"><path {...solid} d="M0 0v10l7-5z" /></Glyph></NavButton>
          <NavButton $w={20} aria-label="最后一页"><Glyph w={10} h={10} c="#b5b5b5"><path d="M9.500 0v10" /><path {...solid} d="M0 0v10l7.500-5z" /></Glyph></NavButton>
          <NavButton $w={13} aria-label="在后面添加页"><NewPage /></NavButton>
          <PageTab><span><Cjk>页</Cjk> 1</span></PageTab>
          <Grip w={6} h={11} />
        </PageNav>
        <ScrollSide>
          <ScrollButton aria-label="向左滚动"><Glyph w={4} h={8}><path {...solid} d="M4 0v8L0 4z" /></Glyph></ScrollButton>
          <HTrack><HThumb><Glyph w={8} h={7} crisp><path d="M.5 0v7M3.500 0v7M6.500 0v7" /></Glyph></HThumb></HTrack>
          <ScrollButton aria-label="向右滚动"><RightArrow c={ink} /></ScrollButton>
          <NavButton $w={18} aria-label="导航器"><Glyph w={11} h={11} c="#555"><circle cx="4.500" cy="4.500" r="4" /><path d="M2 4.500h5M4.500 2v5" strokeDasharray="1 1" /><path strokeWidth="2" d="M7.500 7.500l3 3" /></Glyph></NavButton>
        </ScrollSide>
      </NavRow>
    </Desk>
    <DocPalette>
      <Grip w={6} h={13} />
      <NavButton $w={13} aria-label="文档调色板"><RightArrow /></NavButton>
      <NavButton $w={15} aria-label="滴管"><Pencil c="#555" /></NavButton>
      <NavButton $w={18} aria-label="向左"><Glyph w={6} h={8} c="#c4c4c4" sw={2}><path d="M6 0L1 4l5 4" /></Glyph></NavButton>
      <DocSwatches>
        <Swatch $c="#fff" aria-label="无颜色"><Cross s={16} /></Swatch>
        <Swatch $c="#fff" aria-label="白" />
        <Swatch $c="#231815" aria-label="黑" />
        <Swatch $c="#e99628" aria-label="橘黄" />
      </DocSwatches>
      <NavButton $w={16} aria-label="向右"><Glyph w={6} h={8} c="#bdbdbd" sw={2}><path d="M0 0l5 4-5 4" /></Glyph></NavButton>
      <NavButton $w={27} aria-label="展开"><Glyph w={8} h={7} c="#adadad"><path d="M0 0l3.500 3.500L0 7M4 0l3.500 3.500L4 7" /></Glyph></NavButton>
    </DocPalette>
  </Center>
);

export default function App() {
  return (
    <Shell>
      <GlobalStyle />
      <TitleBar>
        <Glyph w={16} h={16}><path fill="#c4c4c4" stroke="none" d="M0 0h16v16H0z" /><path stroke="#e3e3e3" strokeWidth="1.500" d="M1 0l14 14M0 4l11 11" /></Glyph>
        <Title>CorelDRAW X8 (64-Bit) - <Cjk>未命名</Cjk> -1</Title>
        <WindowButton $w={34} aria-label="登录"><Glyph w={15} h={15} c={faint}><path d="M9 1.500H.5v13h13V7" /><circle cx="12" cy="2.500" r="2.500" /><path {...solid} d="M5 5a2 2 0 1 1 4 0q0 3-1 4 3 .5 3 3H3q0-2.500 3-3-1-1-1-4z" /></Glyph></WindowButton>
        <WindowButton $w={33} aria-label="最小化"><Glyph w={11} h={11} c="#8f8f8f"><path {...solid} d="M0 7h11v3H0z" /></Glyph></WindowButton>
        <WindowButton $w={33} aria-label="还原"><Glyph w={13} h={13} c="#8f8f8f"><path strokeWidth="1.300" d="M4 8H.5V1h8v3M4.500 4.500h8v7.500h-8z" /></Glyph></WindowButton>
        <WindowButton $w={23} aria-label="关闭"><Glyph w={12} h={11} c="#8f8f8f" sw={1.8}><path d="M.5 0l11 11M11.500 0L.5 11" /></Glyph></WindowButton>
      </TitleBar>
      <MenuBar>
        {menus.map(([name, key]) => (
          <MenuItem key={name}><Cjk>{name}</Cjk>(<u>{key}</u>)</MenuItem>
        ))}
      </MenuBar>
      <StandardBar />
      <PropertyBar />
      <Body>
        <Toolbox aria-label="工具箱">
          {toolGroups.map((group, i) => (
            <React.Fragment key={i}>
              {group.map((tool) => (
                <Tool key={tool.name} aria-label={tool.name}>
                  <Glyph w={30} h={29}>
                    <g transform="translate(7 6)">{tool.art}</g>
                    {tool.fly && <path fill="#000" stroke="none" d="M26 20v5h-5z" />}
                  </Glyph>
                </Tool>
              ))}
              <ToolSep />
            </React.Fragment>
          ))}
          <Tool aria-label="快速自定义">
            <Glyph w={30} h={29} c="#b0b0b0"><g transform="translate(7 11)"><PlusCircle /></g></Glyph>
          </Tool>
        </Toolbox>
        <DrawingWindow />
        <PaletteColumn aria-label="默认调色板">
          <PaletteButton $h={8} aria-label="移动调色板"><Grip w={14} h={5} /></PaletteButton>
          <PaletteButton $h={14} aria-label="调色板菜单"><RightArrow /></PaletteButton>
          <PaletteButton $h={14} aria-label="滴管"><Pencil c={faint} /></PaletteButton>
          <PaletteButton $h={18} aria-label="向上"><Glyph w={9} h={5} c="#c8c8c8" sw={2}><path d="M0 5l4.500-4L9 5" /></Glyph></PaletteButton>
          <SwatchList>
            <Swatch $c="#fff" aria-label="无颜色"><Cross s={16} /></Swatch>
            {swatches.map((c) => <Swatch key={c} $c={c} aria-label={c} />)}
          </SwatchList>
          <PaletteButton $h={18} aria-label="向下"><Glyph w={9} h={5} c="#adadad" sw={2}><path d="M0 0l4.500 4L9 0" /></Glyph></PaletteButton>
          <PaletteButton $h={16} aria-label="展开"><Glyph w={8} h={7} c="#adadad"><path d="M0 0l3.500 3.500L0 7M4 0l3.500 3.500L4 7" /></Glyph></PaletteButton>
        </PaletteColumn>
      </Body>
      <StatusBar>
        <Coordinates>( 7.731 , 1.406  )</Coordinates>
        <button aria-label="状态栏选项"><Glyph w={9} h={8} c="#000"><path {...solid} d="M2 0v8l4-4z" /></Glyph></button>
        <FillStatus>
          <Glyph><path d="M.5.5h15v11H.5z" fill="#fff" /><path fill="#f00" stroke="none" d="M2 2h12v4H2z" /><path fill="#00a0e9" stroke="none" d="M2 6h12v4H2z" /><circle cx="8" cy="6" r="2" fill="#ccc" /><path d="M5 13.500h6M2 15.500h12" /></Glyph>
          <Gap $w={14} />
          <Glyph><Bucket /></Glyph>
          <ColorWell $c="#fff"><Cross s={20} /></ColorWell>
          <Gap $w={1} />
          <Cjk>无</Cjk>
        </FillStatus>
        <OutlineStatus>
          <PenNib />
          <ColorWell $c="#231815" />
          <OutlineText><span>C: 0 M: 0 Y: 0 K: 100</span><span>.200 mm</span></OutlineText>
        </OutlineStatus>
      </StatusBar>
      <Callout width="260" height="184" fill="none" stroke="#f00" strokeWidth="4" aria-hidden="true">
        <path d="M1 2h40v43H1z" />
        <path d="M245 177L29 20M49 23L28 19l10 21" strokeLinecap="round" />
      </Callout>
      <Watermark width="232" height="112" fill="rgba(255,255,255,0.5)" stroke="#fff" fontFamily="Liberation Sans, Noto Sans CJK SC, sans-serif" aria-hidden="true">
        <text x="1" y="71" fontSize="50" fontWeight="700" strokeWidth="3">Bai</text>
        <g strokeWidth="1" fill="#fff">
          <ellipse cx="87" cy="29" rx="9" ry="12" /><ellipse cx="103" cy="13" rx="9" ry="12" />
          <ellipse cx="124" cy="14" rx="9" ry="12" /><ellipse cx="136" cy="34" rx="9" ry="12" />
          <path d="M111 32c-9 0-12 9-18 15-6 5-11 9-10 16 1 8 8 11 16 10 9-1 14-1 24 0 9 1 15-2 16-10 0-7-5-11-10-16-6-6-9-15-18-15z" />
        </g>
        <text x="94" y="69" fontSize="30" fontWeight="700" stroke="#d4d4d4">du</text>
        <text x="148" y="70" fontSize="38" fontWeight="700" strokeWidth="2" fontFamily="Noto Sans CJK SC, sans-serif">经验</text>
        <text x="2" y="104" fontSize="28" strokeWidth="1">jingyan.baidu.com</text>
      </Watermark>
    </Shell>
  );
}
